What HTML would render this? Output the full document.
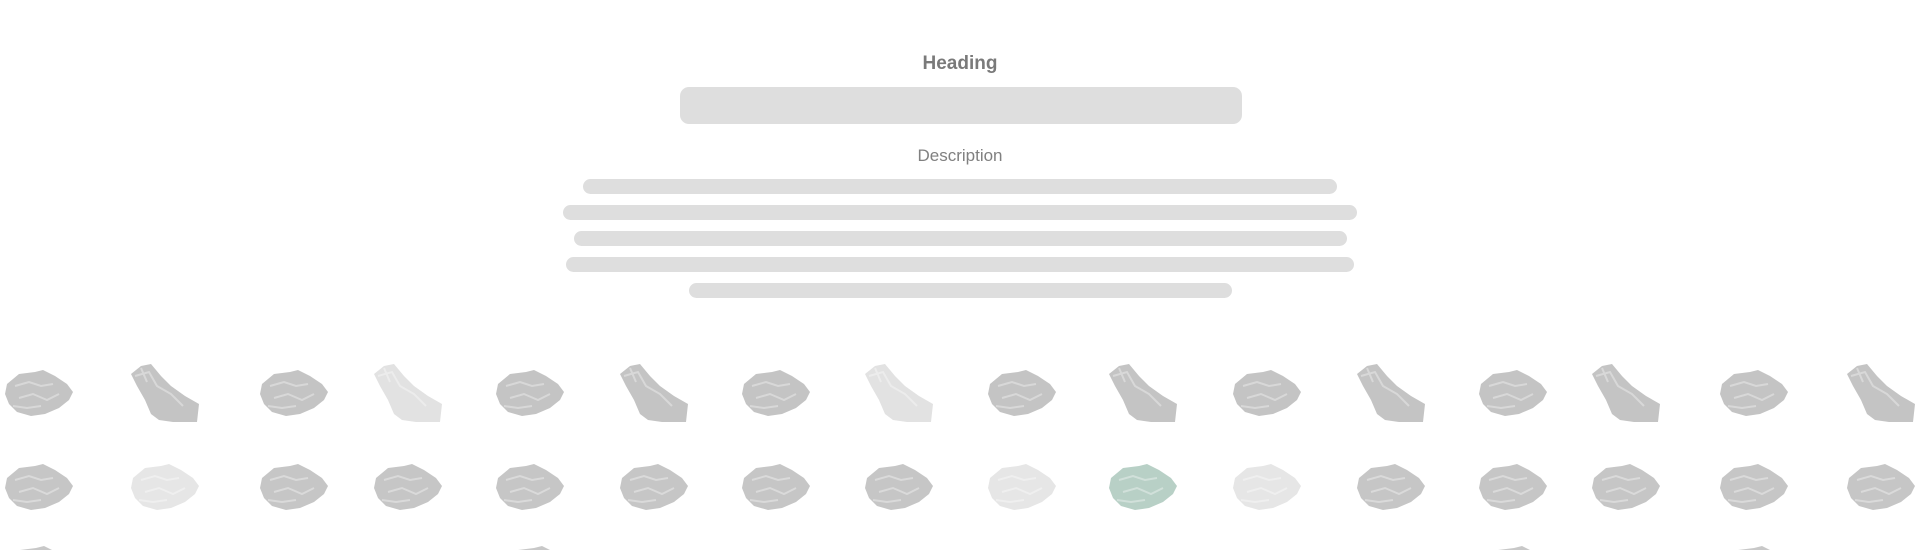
<!DOCTYPE html>
<html style="overflow:hidden;width:1920px;height:550px"><head><meta charset="utf-8"><style>
html,body{margin:0;width:1920px;height:550px;overflow:hidden}
body{background:#fff;position:relative;font-family:"Liberation Sans",sans-serif}
.a{position:absolute}
.bar{position:absolute;background:#dedede;border-radius:8px}
.r{position:absolute;width:74px;height:66px}
#rocks{position:absolute;left:0;top:0;width:1920px;height:550px;overflow:hidden}
</style></head><body>
<svg width="0" height="0" style="position:absolute">
<defs>
<symbol id="A" viewBox="0 0 74 66">
<path d="M6 20 L18 10 L34 8 L42 6 L54 12 L66 20 L72 28 L68 36 L58 44 L44 50 L30 52 L16 48 L8 40 L4 30 Z" fill="currentColor"/>
<path d="M14 22 L28 18 L40 22 L52 20 M18 34 L32 30 L46 36 L58 30 M12 42 L26 44 L40 42" stroke="#fff" stroke-opacity=".35" stroke-width="2" fill="none"/>
</symbol>
<symbol id="B" viewBox="0 0 74 66">
<path d="M4 12 L14 4 L24 2 L34 14 L44 24 L58 34 L72 42 L70 60 L46 60 L32 58 L24 52 L18 38 L10 24 Z" fill="currentColor"/>
<path d="M8 14 L22 10 L30 24 L44 32 L56 44 M14 6 L20 20" stroke="#fff" stroke-opacity=".35" stroke-width="2" fill="none"/>
</symbol>
</defs></svg>
<div class="a" style="left:0;width:1920px;top:53px;text-align:center;font-size:19px;font-weight:bold;color:#7a7a7a">Heading</div>
<div class="bar" style="left:680px;top:87px;width:562px;height:37px;border-radius:9px"></div>
<div class="a" style="left:0;width:1920px;top:146px;text-align:center;font-size:17px;color:#808080">Description</div>
<div class="bar" style="left:583px;top:179px;width:754px;height:15px"></div>
<div class="bar" style="left:563px;top:205px;width:794px;height:15px"></div>
<div class="bar" style="left:574px;top:231px;width:773px;height:15px"></div>
<div class="bar" style="left:566px;top:257px;width:788px;height:15px"></div>
<div class="bar" style="left:689px;top:283px;width:543px;height:15px"></div>
<div id="rocks"></div>
<script>
var xs=[38,164,293,407,529,653,775,898,1021,1142,1266,1390,1512,1625,1753,1880];
var h='';
for(var i=0;i<16;i++){
 var t=i%2==0?'A':'B';var c=(i==3||i==7)?'#e2e2e2':'#c4c4c4';
 h+='<svg class="r" style="left:'+(xs[i]-37)+'px;top:'+(t=='A'?364:362)+'px;color:'+c+'"><use href="#'+t+'"/></svg>';
 var c2=(i==1||i==8||i==10)?'#e6e6e6':(i==9?'#b8d0c6':'#c6c6c6');
 h+='<svg class="r" style="left:'+(xs[i]-37)+'px;top:458px;color:'+c2+'"><use href="#A"/></svg>';
}
[2,500,1480,1720].forEach(function(x){h+='<svg class="r" style="left:'+x+'px;top:540px;color:#c8c8c8"><use href="#A"/></svg>';});
document.getElementById('rocks').innerHTML=h;
</script>
</body></html>
